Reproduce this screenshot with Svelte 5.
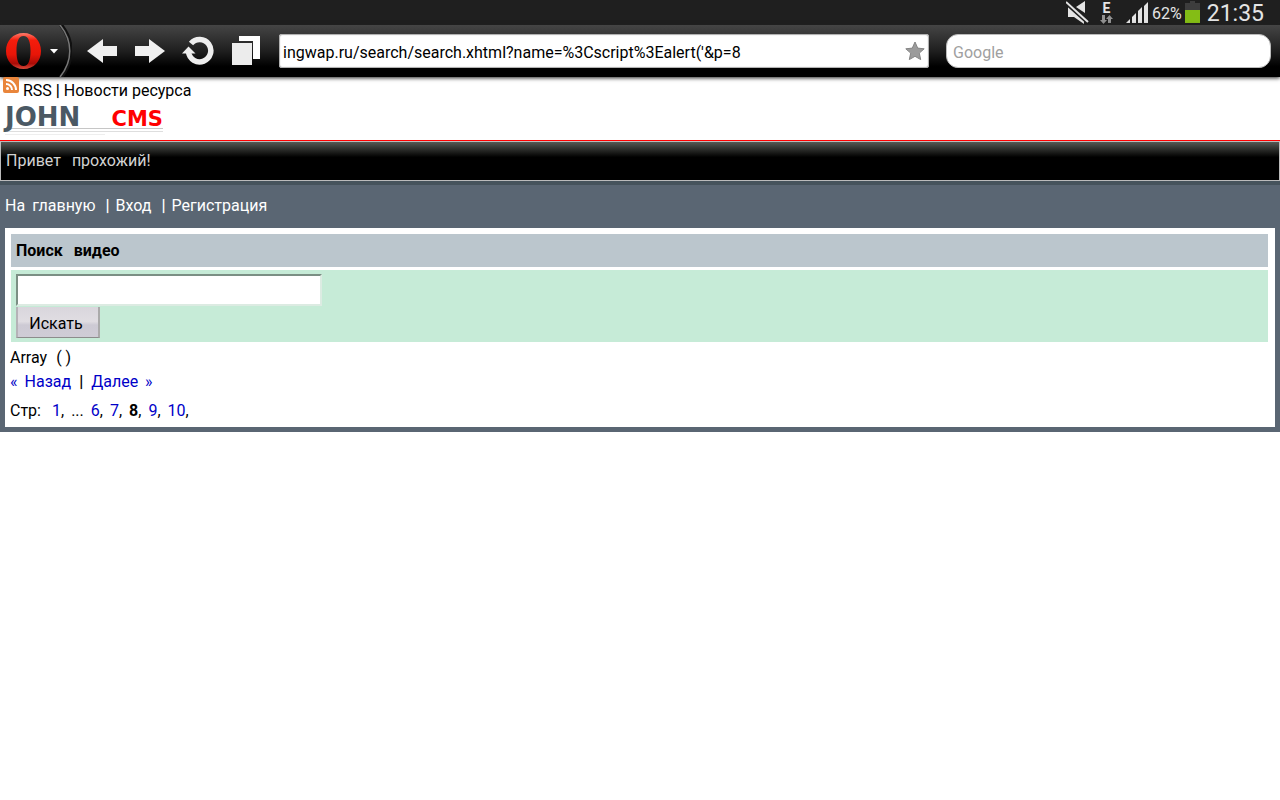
<script lang="ts">
  let address = $state("ingwap.ru/search/search.xhtml?name=%3Cscript%3Ealert('&p=8");
  let google = $state('');
  let query = $state('');

  const pages = [6, 7, 8, 9, 10];
  const current = 8;
</script>

<div class="status">
  <svg class="mute" width="24" height="25" viewBox="0 0 24 25" aria-hidden="true">
    <path d="M2 7v10h6l10 7v-3L4 8zM10 7l9-6v12z" fill="#e4e4e4" />
    <path d="M0 2l22 20" stroke="#1f1f1f" stroke-width="5" />
    <path d="M0 2l22 20" stroke="#e4e4e4" stroke-width="2" />
  </svg>
  <div class="network">
    <b>E</b>
    <svg width="13" height="9" viewBox="0 0 13 9" aria-hidden="true">
      <path d="M2 0h3v5h2L3.500 9 0 5h2zM8 8h3V4h2L9.500 0 6 4h2z" fill="#929292" />
    </svg>
  </div>
  <svg class="signal" width="24" height="22" viewBox="0 0 24 22" aria-hidden="true">
    <path d="M1 21l4-4v4zM7 15l4-4v10H7zM13 9l4-4v16h-4zM19 4l4-4v21h-4z" fill="#e4e4e4" />
  </svg>
  <span class="percent">62%</span>
  <svg width="15" height="23" viewBox="0 0 15 23" aria-hidden="true">
    <path d="M5 0h5v2h5v7H0V2h5z" fill="#3d3d3d" />
    <path d="M0 9h15v13H0z" fill="#84bd15" />
  </svg>
  <time>21:35</time>
</div>

<div class="toolbar">
  <button class="opera" type="button" aria-label="Opera menu">
    <svg width="72" height="52" viewBox="0 0 72 52">
      <defs>
        <linearGradient id="red" x1="0" y1="0" x2="0" y2="1">
          <stop offset="0" stop-color="#ff7d6d" />
          <stop offset=".2" stop-color="#f51d0c" />
          <stop offset=".6" stop-color="#e81508" />
          <stop offset=".85" stop-color="#a90c07" />
          <stop offset="1" stop-color="#d94b3c" />
        </linearGradient>
      </defs>
      <path d="M61 0c13 16 13 36 0 52" fill="none" stroke="#111" stroke-width="4" />
      <path d="M60 0c13 16 13 36 0 52" fill="none" stroke="#777" stroke-width="1.500" />
      <path fill="url(#red)" fill-rule="evenodd" d="M23.500 8C13 8 6 16 6 26s7 18 17.500 18S41 36 41 26 34 8 23.500 8zm0 3c5 0 7 6 7 15s-2 15-7 15-7-6-7-15 2-15 7-15z" />
      <path d="M50 24h8l-4 4.500z" fill="#fff" />
    </svg>
  </button>
  <button type="button" aria-label="Back">
    <svg width="32" height="26" viewBox="0 0 32 26">
      <path d="M1 13L17 1v7h14v10H17v7z" fill="#f0f0f0" />
    </svg>
  </button>
  <button type="button" aria-label="Forward">
    <svg width="32" height="26" viewBox="0 0 32 26">
      <path d="M31 13L15 1v7H1v10h14v7z" fill="#f0f0f0" />
    </svg>
  </button>
  <button type="button" aria-label="Reload">
    <svg width="32" height="30" viewBox="0 0 32 30">
      <path d="M9 7.500A11.200 11.200 0 1 1 6.500 16" fill="none" stroke="#eee" stroke-width="5.500" />
      <path d="M0 17.500l6.500-7 7 7z" fill="#eee" />
    </svg>
  </button>
  <button type="button" aria-label="Tabs">
    <svg width="30" height="30" viewBox="0 0 30 30">
      <path d="M9 0h21v23h-7V5H9z" fill="#fff" />
      <path d="M2 7h20v22H2z" fill="#ececec" />
    </svg>
  </button>
  <div class="address">
    <input type="text" aria-label="Address" bind:value={address} />
    <button type="button" aria-label="Bookmark">
      <svg width="20" height="20" viewBox="0 0 20 20">
        <path d="M10 1l2.700 6.100 6.500.7-4.900 4.300 1.400 6.500L10 15.300l-5.700 3.300 1.400-6.500L.8 7.800l6.500-.7z" fill="#9b9b9b" stroke="#858585" />
      </svg>
    </button>
  </div>
  <div class="google">
    <input type="search" placeholder="Google" aria-label="Google" bind:value={google} />
  </div>
</div>

<header>
  <div class="rss">
    <svg width="16" height="16" viewBox="0 0 16 16" aria-hidden="true">
      <rect width="16" height="16" rx="2" fill="#e9853b" />
      <circle cx="4.500" cy="11.500" r="1.500" fill="#fff" />
      <path d="M3 7a6 6 0 0 1 6 6M3 3a10 10 0 0 1 10 10" fill="none" stroke="#fff" stroke-width="2" />
    </svg>
    <span><a href="#rss">RSS</a> <span class="bar">|</span> <a href="#news">Новости ресурса</a></span>
  </div>
  <a class="logo" href="#home"><span class="john">JOHN</span><span class="cms">CMS</span></a>
</header>

<div class="greeting"><span>Привет</span> <span>прохожий!</span></div>

<main>
  <nav>
    <a href="#home"><span>На</span> <span>главную</span></a>
    <span class="item"><span class="bar">|</span> <a href="#login">Вход</a></span>
    <span class="item"><span class="bar">|</span> <a href="#register">Регистрация</a></span>
  </nav>

  <div class="content">
    <h1><span>Поиск</span> <span>видео</span></h1>
    <form onsubmit={(e) => e.preventDefault()}>
      <input type="text" aria-label="Поиск видео" bind:value={query} />
      <button type="submit">Искать</button>
    </form>
    <div class="line result"><span>Array</span> <span>( )</span></div>
    <div class="line pager">
      <a href="#prev"><span>«</span> <span>Назад</span></a>
      <span class="bar">|</span>
      <a href="#next"><span>Далее</span> <span>»</span></a>
    </div>
    <div class="line pages">
      <span class="label">Стр:</span>
      <span><a href="#p1">1</a>,</span>
      <span>...</span>
      {#each pages as page}
        <span>{#if page === current}<b>{page}</b>{:else}<a href="#p{page}">{page}</a>{/if},</span>
      {/each}
    </div>
  </div>
</main>

<style>
  :global(body) {
    margin: 0;
    background: #fff;
    color: #000;
    font: 16px/24px Roboto, sans-serif;
  }

  a {
    color: inherit;
    text-decoration: none;
  }

  svg {
    display: block;
    flex: none;
  }

  input,
  button {
    box-sizing: border-box;
    font: inherit;
    color: inherit;
  }

  .bar {
    font-weight: 700;
  }

  .status {
    display: flex;
    justify-content: flex-end;
    align-items: center;
    height: 25px;
    padding-right: 16px;
    background: #1f1f1f;
    color: #e4e4e4;
  }

  .mute {
    margin-right: 10px;
  }

  .network {
    display: flex;
    flex-direction: column;
    align-items: center;
    margin-right: 12px;
  }

  .network b {
    font-size: 14px;
    line-height: 13px;
  }

  .percent {
    margin: 0 3px;
    padding-top: 2px;
  }

  time {
    margin-left: 7px;
    padding-top: 2px;
    font-size: 23px;
  }

  .toolbar {
    position: relative;
    display: flex;
    align-items: center;
    height: 52px;
    padding-right: 9px;
    background: linear-gradient(#454545, #1f1f1f 50%, #000 80%);
    box-shadow: 0 1px 4px #222;
  }

  .toolbar button {
    flex: none;
    margin-right: 16px;
    padding: 0;
    border: 0;
    background: none;
  }

  .toolbar .opera {
    margin-right: 14px;
  }

  .address {
    display: flex;
    flex: 2;
    align-items: center;
    height: 34px;
    margin: 0 17px 0 3px;
    border-radius: 3px;
    background: #fff;
    box-shadow: inset 0 0 1px 1px #aaa;
  }

  .address input {
    flex: 1;
    min-width: 0;
    height: 34px;
    padding: 2px 4px 0;
    border: 0;
    outline: 0;
    background: none;
  }

  .address button {
    margin-right: 4px;
  }

  .google {
    flex: 1;
    min-width: 0;
  }

  .google input {
    display: block;
    width: 100%;
    height: 34px;
    padding: 2px 6px 0;
    border: 1px solid #bbb;
    border-radius: 12px;
    background: #fff;
    outline: 0;
    appearance: none;
  }

  .google input::placeholder {
    color: #a0a0a0;
    opacity: 1;
  }

  .rss {
    display: flex;
    gap: 4px;
    position: relative;
    height: 26px;
    padding: 0 3px;
  }

  .rss > span {
    padding-top: 2px;
  }

  .logo {
    display: flex;
    align-items: baseline;
    justify-content: space-between;
    width: 158px;
    height: 37px;
    margin-left: 5px;
    font-family: 'DejaVu Sans', sans-serif;
    font-weight: bold;
    background:
      linear-gradient(#c6c6c6, #c6c6c6) 0 25px / 158px 1px no-repeat,
      linear-gradient(#dedede, #dedede) 0 28px / 158px 1px no-repeat,
      linear-gradient(#eee, #eee) 0 31px / 100px 1px no-repeat;
  }

  .john {
    color: #4b5964;
    font-size: 26px;
    line-height: 28px;
  }

  .cms {
    color: #f00;
    font-size: 21px;
    line-height: 24px;
  }

  header {
    border-bottom: 1px solid #f00;
  }

  .greeting {
    display: flex;
    gap: 11px;
    padding: 7px 5px;
    border: 1px solid #bbb;
    background: linear-gradient(#555853, #000 40%);
    color: #d2d2d2;
  }

  main {
    padding: 0 5px 5px;
    border-top: 4px solid #46535c;
    background: #5a6673;
  }

  nav {
    display: flex;
    gap: 10px;
    padding: 9px 0 10px;
    color: #fff;
  }

  nav a {
    display: flex;
    gap: 7px;
  }

  .item {
    display: flex;
    gap: 6px;
  }

  .content {
    padding: 6px 7px 4px 6px;
    background: #fff;
  }

  h1 {
    display: flex;
    gap: 11px;
    margin: 0 0 3px;
    padding: 5px 5px 4px;
    background: #bbc6cd;
    font-size: 16px;
    line-height: 24px;
  }

  form {
    display: flex;
    flex-direction: column;
    align-items: flex-start;
    gap: 1px;
    margin-bottom: 4px;
    padding: 4px 5px;
    background: #c6ebd7;
  }

  form input {
    width: 306px;
    max-width: 100%;
    height: 32px;
    border: 2px solid;
    border-color: #7b8f84 #dcebe2 #dcebe2 #7b8f84;
    background: #fff;
  }

  form button {
    height: 31px;
    width: 84px;
    padding: 4px 4px 0 0;
    border: 1px solid;
    border-width: 0 2px 1px;
    border-color: #aaa #aaa #8c8c8c #b5b2b7;
    background: linear-gradient(#d9d6dc, #e0dde2 48%, #cdcad4 60%, #cfccd6);
  }

  .line {
    display: flex;
    margin-left: -1px;
  }

  .result {
    gap: 9px;
  }

  .pager {
    gap: 8px;
  }

  .pager a {
    display: flex;
    gap: 7px;
  }

  .line a {
    color: #0000c8;
  }

  .pages {
    gap: 7px;
    padding-top: 5px;
  }

  .label {
    margin-right: 4px;
  }
</style>
